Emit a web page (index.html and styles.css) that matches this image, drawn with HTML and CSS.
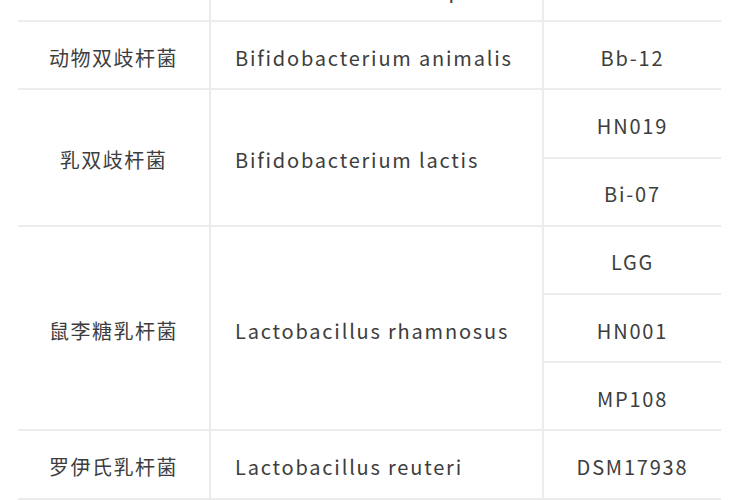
FILE: index.html
```html
<!DOCTYPE html>
<html lang="zh">
<head>
<meta charset="utf-8">
<link rel="stylesheet" href="styles.css">
</head>
<body>
<div class="sheet">
  <div class="grid">
    <div class="cell c1">嗜酸乳杆菌</div>
    <div class="cell c2">Lactobacillus acidophilus</div>
    <div class="cell c3">NCFM</div>

    <div class="cell c1">动物双歧杆菌</div>
    <div class="cell c2">Bifidobacterium animalis</div>
    <div class="cell c3">Bb-12</div>

    <div class="cell c1 span2">乳双歧杆菌</div>
    <div class="cell c2 span2">Bifidobacterium lactis</div>
    <div class="cell c3">HN019</div>
    <div class="cell c3">Bi-07</div>

    <div class="cell c1 span3">鼠李糖乳杆菌</div>
    <div class="cell c2 span3">Lactobacillus rhamnosus</div>
    <div class="cell c3">LGG</div>
    <div class="cell c3">HN001</div>
    <div class="cell c3">MP108</div>

    <div class="cell c1">罗伊氏乳杆菌</div>
    <div class="cell c2">Lactobacillus reuteri</div>
    <div class="cell c3">DSM17938</div>
  </div>
</div>
</body>
</html>
```

FILE: styles.css
```css
html, body {
  margin: 0;
  padding: 0;
  background: #ffffff;
}
.sheet {
  width: 750px;
  height: 500px;
  overflow: hidden;
}
.grid {
  display: grid;
  grid-template-columns: 193px 333px 177px;
  grid-auto-rows: 68.2px;
  margin: -46px 0 0 18px;
  width: 703px;
  font-family: "Noto Sans CJK SC", "Noto Sans", sans-serif;
  font-size: 20px;
  letter-spacing: 1.8px;
  color: #3d3d3d;
}
.cell {
  box-sizing: border-box;
  border-bottom: 2px solid #ececec;
  display: flex;
  align-items: center;
  padding-top: 4px;
  white-space: nowrap;
}
.c1 {
  grid-column: 1;
  justify-content: center;
  letter-spacing: 1.5px;
  border-right: 2px solid #ececec;
}
.c2 {
  grid-column: 2;
  padding-left: 24px;
  border-right: 2px solid #ececec;
}
.c3 {
  grid-column: 3;
  justify-content: center;
}
.span2 { grid-row: span 2; }
.span3 { grid-row: span 3; }
```
